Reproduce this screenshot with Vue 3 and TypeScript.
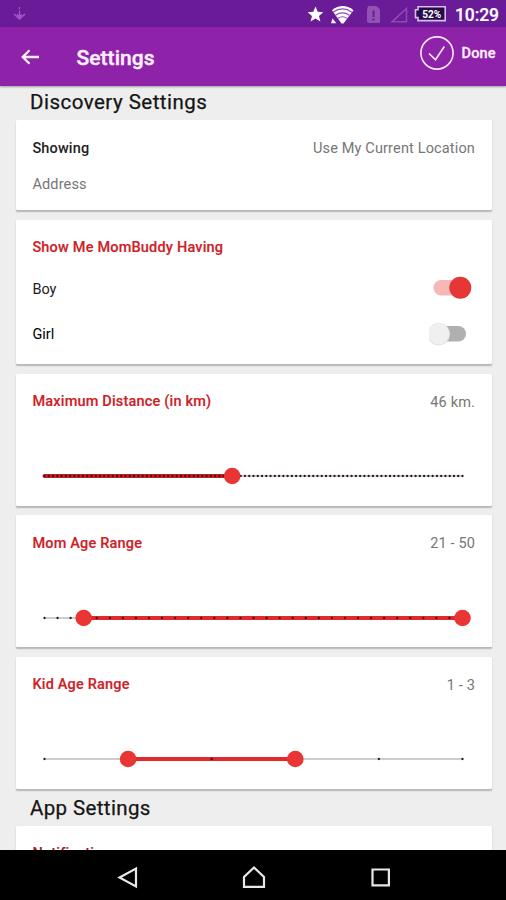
<script setup lang="ts">
interface RangeCard {
  title: string
  value: string
  min: number
  max: number
  from: number
  to: number
  single: boolean
  cls: string
}

const ranges: RangeCard[] = [
  { title: 'Maximum Distance (in km)', value: '46 km.', min: 2, max: 100, from: 2, to: 46, single: true, cls: 'distance' },
  { title: 'Mom Age Range', value: '21 - 50', min: 18, max: 50, from: 21, to: 50, single: false, cls: 'mom' },
  { title: 'Kid Age Range', value: '1 - 3', min: 0, max: 5, from: 1, to: 3, single: false, cls: 'kid' },
]

const trackStart = 12.5
const trackLength = 418

function position(card: RangeCard, n: number): number {
  return trackStart + ((n - card.min) / (card.max - card.min)) * trackLength
}

function ticks(card: RangeCard): number[] {
  return Array.from({ length: card.max - card.min + 1 }, (_, i) => position(card, card.min + i))
}
</script>

<template>
  <div class="screen">
    <div class="status">
      <svg class="download" width="14" height="15" viewBox="0 0 14 15">
        <path d="M7.500 1v2M7.500 4.500v7M2 8l5.500 5L13 8M5 8.500l2.500 2.500 2.500-2.500" />
      </svg>
      <svg class="indicators" width="196" height="27" viewBox="0 0 196 27">
        <path class="solid" d="M13.500 6.500l2.200 5.300 5.600.4-4.300 3.700 1.400 5.600-4.900-3-4.900 3L10 15.900l-4.300-3.700 5.600-.4z" />
        <path class="solid" d="M30 10.200Q40.700 1.800 51.500 10.200L41.500 23.500h-2z" />
        <path class="arcs" d="M31 12.200q9.500-6.600 19 0M33.500 15.200q7-4.600 14 0M36 18.200q4.500-3 9 0" />
        <path class="solid" d="M30.500 18.500l3.800 4.800h-5.300z" />
        <path class="dim-fill" d="M66 6h8.500l3.500 3.500V22q0 1-1 1H67q-2 0-2-2V10z" />
        <path class="dim-mark" d="M71.500 10.500v6.500M71.500 18.500v2" />
        <path class="dim-line" d="M104.500 8.500v13.300H90z" />
        <path class="battery" d="M116 6.800h27.200v13.800H116v-3h-2.500V9.800h2.500z" />
        <text x="129.800" y="17.500" class="charge" text-anchor="middle" textLength="19" lengthAdjust="spacingAndGlyphs">52%</text>
      </svg>
      <span class="clock">10:29</span>
    </div>

    <header class="bar">
      <svg class="back" width="20" height="18" viewBox="0 0 20 18">
        <path d="M19 9H2.500M9.500 2.200L2.700 9l6.800 6.800" />
      </svg>
      <h1>Settings</h1>
      <button class="done" type="button">
        <svg width="36" height="36" viewBox="0 0 36 36">
          <circle cx="18" cy="18" r="16.100" />
          <path d="M10 18.500l6.500 6.200L25.300 11.500" />
        </svg>
        <span>Done</span>
      </button>
    </header>

    <main class="content">
      <h2 class="discovery"><span>Discovery Settings</span></h2>

      <section class="card location">
        <div class="row">
          <span class="showing">Showing</span>
          <span class="muted current">Use My Current Location</span>
        </div>
        <div class="muted address">Address</div>
      </section>

      <section class="card having">
        <h3>Show Me MomBuddy Having</h3>
        <div class="row option">
          <span class="boy">Boy</span>
          <svg width="46" height="28" viewBox="0 0 46 28">
            <rect class="on-track" x="4.500" y="6" width="34" height="15.500" rx="7.750" />
            <circle class="on-thumb" cx="31.300" cy="13.800" r="11" />
          </svg>
        </div>
        <div class="row option">
          <span class="girl">Girl</span>
          <svg width="46" height="28" viewBox="0 0 46 28">
            <rect class="off-track" x="6" y="6" width="31" height="15.500" rx="7.750" />
            <circle class="off-ring" cx="9.700" cy="14.200" r="11.200" />
            <circle class="off-thumb" cx="9.700" cy="13.800" r="10.600" />
          </svg>
        </div>
      </section>

      <section v-for="card in ranges" :key="card.title" class="card range" :class="card.cls">
        <div class="row">
          <h3>{{ card.title }}</h3>
          <span class="muted">{{ card.value }}</span>
        </div>
        <svg class="slider" width="443" height="20" viewBox="0 0 443 20">
          <line class="rail" :x1="trackStart" :x2="trackStart + trackLength" y1="10" y2="10" />
          <line class="span" :x1="position(card, card.from)" :x2="position(card, card.to)" y1="10" y2="10" />
          <circle v-for="x in ticks(card)" :key="x" class="tick" :cx="x" cy="10" r="1.150" />
          <circle v-if="!card.single" class="thumb" :cx="position(card, card.from)" cy="10" r="8.300" />
          <circle class="thumb" :cx="position(card, card.to)" cy="10" r="8.300" />
        </svg>
      </section>

      <h2 class="app"><span>App Settings</span></h2>
      <section class="card notifications">
        <h3>Notifications</h3>
      </section>
    </main>

    <nav class="nav">
      <svg width="506" height="50" viewBox="0 0 506 50">
        <path d="M136 18.500v18L119.500 27.500z" />
        <path d="M254 17.500L264 27v9.800h-20V27z" />
        <path d="M372.500 19.500h16.400v15.800h-16.400z" />
      </svg>
    </nav>
  </div>
</template>

<style>
body {
  margin: 0;
}
</style>

<style scoped>
.screen {
  width: 506px;
  height: 900px;
  display: flex;
  flex-direction: column;
  overflow: hidden;
  background: #eee;
  font-family: Roboto, "Liberation Sans", sans-serif;
  color: #222;
}
svg {
  display: block;
  fill: none;
}
h1, h2, h3 {
  margin: 0;
}
.status {
  height: 27px;
  flex: none;
  display: flex;
  background: #6a1b98;
  box-sizing: border-box;
  padding-left: 12px;
}
.download {
  margin-top: 6px;
  stroke: #a557cb;
  stroke-width: 1.3;
}
.indicators {
  margin-left: 276px;
  margin-right: -43px;
  flex: none;
}
.solid {
  fill: #fff;
}
.arcs {
  stroke: #8d4eb1;
  stroke-width: 1.1;
}
.dim-fill {
  fill: #9152b4;
}
.dim-mark {
  stroke: #6a1b98;
  stroke-width: 2;
}
.dim-line {
  stroke: #9049b3;
  stroke-width: 1.6;
}
.battery {
  fill: #260b49;
  stroke: #d9bce8;
  stroke-width: 1.6;
}
.charge {
  fill: #fff;
  font-size: 10px;
  font-weight: 700;
}
.clock {
  color: #fff;
  font-size: 17.500px;
  font-weight: 500;
  line-height: 30px;
  letter-spacing: -0.1px;
  -webkit-text-stroke: 0.2px #fff;
}
.bar {
  position: relative;
  z-index: 1;
  height: 59px;
  flex: none;
  display: flex;
  align-items: center;
  box-sizing: border-box;
  padding: 0 10px 0 20px;
  background: #8e22a8;
  box-shadow: 0 1px 2px rgba(0, 0, 0, 0.35);
  color: #fceffd;
}
.back {
  stroke: #fceffd;
  stroke-width: 2.300;
}
.bar h1 {
  margin: 2px auto 0 36.500px;
  font-size: 21px;
  font-weight: 500;
  letter-spacing: 0.05px;
  -webkit-text-stroke: 0.4px #fceffd;
}
.done {
  display: flex;
  align-items: center;
  gap: 7px;
  padding: 0;
  margin-right: 0.5px;
  margin-bottom: 8px;
  border: 0;
  background: none;
  color: inherit;
  font: 500 14.500px Roboto, sans-serif;
  letter-spacing: 0.1px;
  -webkit-text-stroke: 0.3px #fceffd;
}
.done svg {
  stroke: #fae8fc;
  stroke-width: 1.6;
}
.done span {
  padding-top: 1px;
}
.content {
  flex: 1;
  min-height: 0;
  overflow: hidden;
}
h2 {
  padding-left: 30px;
  font-size: 20.500px;
  font-weight: 400;
  color: #151515;
  -webkit-text-stroke: 0.25px #151515;
}
.discovery {
  height: 34px;
  line-height: 32px;
  letter-spacing: 0.48px;
}
.app {
  height: 37.500px;
  line-height: 39px;
  letter-spacing: 0.37px;
}
.card {
  margin: 0 14.500px 9.500px 16px;
  padding: 0 16.500px 0 16.400px;
  box-sizing: border-box;
  border-radius: 1.5px;
  background: #fff;
  box-shadow: 0 1.5px 1.5px rgba(0, 0, 0, 0.24);
  font-size: 14.500px;
  letter-spacing: 0.15px;
}
.row {
  display: flex;
  justify-content: space-between;
  align-items: center;
}
.muted {
  color: #767676;
}
h3 {
  color: #ce2127;
  font-size: 14.500px;
  font-weight: 500;
  line-height: 20px;
  letter-spacing: 0.19px;
  -webkit-text-stroke: 0.15px #ce2127;
}
.location {
  height: 90px;
  padding-top: 18px;
}
.location .row {
  height: 20px;
}
.showing {
  font-weight: 500;
  letter-spacing: 0.15px;
}
.address {
  margin-top: 17px;
  line-height: 20px;
}
.having {
  height: 144.500px;
  padding-top: 18.500px;
}
.option {
  height: 28px;
  margin-top: 17.500px;
}
.option span {
  padding-top: 2px;
}
h3 + .option {
  margin-top: 16px;
}
.boy {
  letter-spacing: 0;
}
.girl {
  color: #000;
  letter-spacing: 0;
}
.on-track {
  fill: #f6b8b7;
}
.on-thumb {
  fill: #e53735;
}
.off-track {
  fill: #b0b0b0;
}
.off-ring {
  fill: #dedede;
}
.off-thumb {
  fill: #f0f0f0;
}
.range {
  height: 132px;
  padding-top: 18.500px;
}
.slider {
  margin: 54px 0 0 -0.9px;
}
.rail {
  stroke: #bdbdbd;
  stroke-width: 1.5;
}
.span {
  stroke: #e3292c;
  stroke-width: 4;
  stroke-linecap: round;
}
.distance .span {
  stroke: #c91f24;
}
.tick {
  fill: #2b1717;
}
.thumb {
  fill: #e93534;
}
.kid {
  margin-bottom: 0;
}
.notifications {
  height: 80px;
  padding-top: 17.500px;
}
.notifications h3 {
  color: #a5182c;
}
.nav {
  position: relative;
  height: 50px;
  flex: none;
  background: #000;
}
.nav path {
  stroke: #e8e8e8;
  stroke-width: 2.200;
}
</style>
